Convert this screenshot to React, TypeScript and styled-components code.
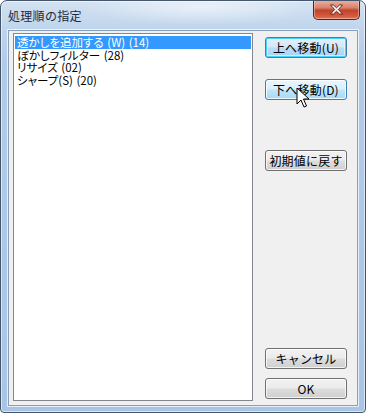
import React from 'react'
import styled, { createGlobalStyle, css } from 'styled-components'

const GlobalStyle = createGlobalStyle`
  html, body {
    margin: 0;
    padding: 0;
    background: #ffffff;
  }
  body {
    font-family: "Noto Sans CJK JP", "Liberation Sans", sans-serif;
  }
`

const Window = styled.div`
  position: relative;
  box-sizing: border-box;
  width: 366px;
  height: 413px;
  display: flex;
  flex-direction: column;
  border: 1px solid #45566b;
  border-radius: 7px 7px 4px 4px;
  background:
    radial-gradient(ellipse 120px 18px at 200px 6px, rgba(255, 255, 255, 0.55), rgba(255, 255, 255, 0) 100%),
    linear-gradient(180deg, #d3e2f2 0px, #c0d5ec 28px, #b2cbe8 60px, #a9c5e6 100%);
  box-shadow: inset 0 0 0 1px rgba(255, 255, 255, 0.55);
  overflow: hidden;
`

const TitleBar = styled.div`
  height: 29px;
  display: flex;
  align-items: flex-start;
  justify-content: space-between;
  padding-left: 7px;
`

const Title = styled.div`
  margin-top: 7px;
  font-size: 12px;
  line-height: 16px;
  color: #1b2a3c;
  letter-spacing: 0.3px;
`

const CloseButton = styled.div`
  margin-top: -1px;
  margin-right: 5px;
  width: 47px;
  height: 20px;
  box-sizing: border-box;
  display: flex;
  align-items: center;
  justify-content: center;
  border: 1px solid #5b2318;
  border-top: none;
  border-radius: 0 0 5px 5px;
  background: linear-gradient(180deg, #eab3a5 0%, #d9826c 40%, #c1432c 55%, #d55b3f 85%, #e07a5a 100%);
  box-shadow: inset 0 0 0 1px rgba(255, 220, 210, 0.45);
`

const Client = styled.div`
  box-sizing: border-box;
  height: 376px;
  margin: 0 7px;
  display: flex;
  gap: 12px;
  padding: 2px 10px 4px 4px;
  background: #f0f0f0;
  border: 1px solid #8aa0ba;
  box-shadow: 0 0 0 1px rgba(255, 255, 255, 0.7);
`

const ListBox = styled.div`
  box-sizing: border-box;
  width: 240px;
  height: 368px;
  padding: 1px;
  background: #ffffff;
  border: 1px solid #828790;
  font-size: 11.5px;
  font-feature-settings: "palt";
`

const ListItem = styled.div<{ $selected?: boolean }>`
  height: 12.4px;
  line-height: 12.4px;
  padding-left: 2px;
  white-space: nowrap;
  word-spacing: 1px;
  color: #000000;
  ${(p) =>
    p.$selected &&
    css`
      margin-top: 1px;
      background: #3399ff;
      color: #ffffff;
      height: 13px;
      line-height: 13px;
    `}
`

const ButtonColumn = styled.div`
  width: 82px;
  display: flex;
  flex-direction: column;
  padding: 4px 0 2px;
`

type ButtonState = 'normal' | 'default' | 'hover'

const Button = styled.button<{ $state?: ButtonState; $gap?: number; $push?: boolean }>`
  box-sizing: border-box;
  width: 82px;
  height: 21px;
  padding: 0;
  margin-top: ${(p) => (p.$push ? 'auto' : `${p.$gap ?? 0}px`)};
  font-family: "Noto Sans CJK JP", "Liberation Sans", sans-serif;
  font-size: 12px;
  line-height: 19px;
  letter-spacing: 0.2px;
  color: #000000;
  border-radius: 3px;
  border: 1px solid #707070;
  background: linear-gradient(180deg, #f2f2f2 0%, #ebebeb 48%, #dddddd 52%, #cfcfcf 100%);
  box-shadow: inset 0 0 0 1px rgba(255, 255, 255, 0.75);
  ${(p) =>
    p.$state === 'default' &&
    css`
      border-color: #3c7fb1;
      background: linear-gradient(180deg, #e3f0fb 0%, #d3e8fa 48%, #bcdcf7 52%, #a9d3f5 100%);
      box-shadow: inset 0 0 0 1px #48d2f8, inset 0 0 0 2px rgba(255, 255, 255, 0.5);
    `}
  ${(p) =>
    p.$state === 'hover' &&
    css`
      border-color: #3c7fb1;
      background: linear-gradient(180deg, #eaf6fd 0%, #d9f0fc 48%, #bee6fd 52%, #a7d9f5 100%);
      box-shadow: inset 0 0 0 1px rgba(255, 255, 255, 0.8);
    `}
`

const Cursor = styled.svg`
  position: absolute;
  left: 295px;
  top: 86px;
  width: 14px;
  height: 22px;
  pointer-events: none;
`

const items = ['透かしを追加する (W) (14)', 'ぼかしフィルター (28)', 'リサイズ (02)', 'シャープ(S) (20)']

export default function App() {
  return (
    <>
      <GlobalStyle />
      <Window>
        <TitleBar>
          <Title>処理順の指定</Title>
          <CloseButton>
            <svg width="15" height="11" viewBox="0 0 15 11">
              <path d="M1.5 1 L4.5 1 L7.5 3.8 L10.5 1 L13.5 1 L9.3 5.5 L13.5 10 L10.5 10 L7.5 7.2 L4.5 10 L1.5 10 L5.7 5.5 Z" fill="#ffffff" stroke="#4a1e16" strokeWidth="0.9" strokeLinejoin="round" />
            </svg>
          </CloseButton>
        </TitleBar>
        <Client>
          <ListBox>
            {items.map((t, i) => (
              <ListItem key={i} $selected={i === 0}>
                {t}
              </ListItem>
            ))}
          </ListBox>
          <ButtonColumn>
            <Button $state="default">上へ移動(U)</Button>
            <Button $state="hover" $gap={21}>
              下へ移動(D)
            </Button>
            <Button $gap={50}>初期値に戻す</Button>
            <Button $push>キャンセル</Button>
            <Button $gap={9}>OK</Button>
          </ButtonColumn>
        </Client>
        <Cursor viewBox="0 0 14 22">
          <path d="M1 1 L1 17 L5 13 L8 20 L10.5 19 L7.5 12 L13 12 Z" fill="#ffffff" stroke="#000000" strokeWidth="1" strokeLinejoin="round" />
        </Cursor>
      </Window>
    </>
  )
}
